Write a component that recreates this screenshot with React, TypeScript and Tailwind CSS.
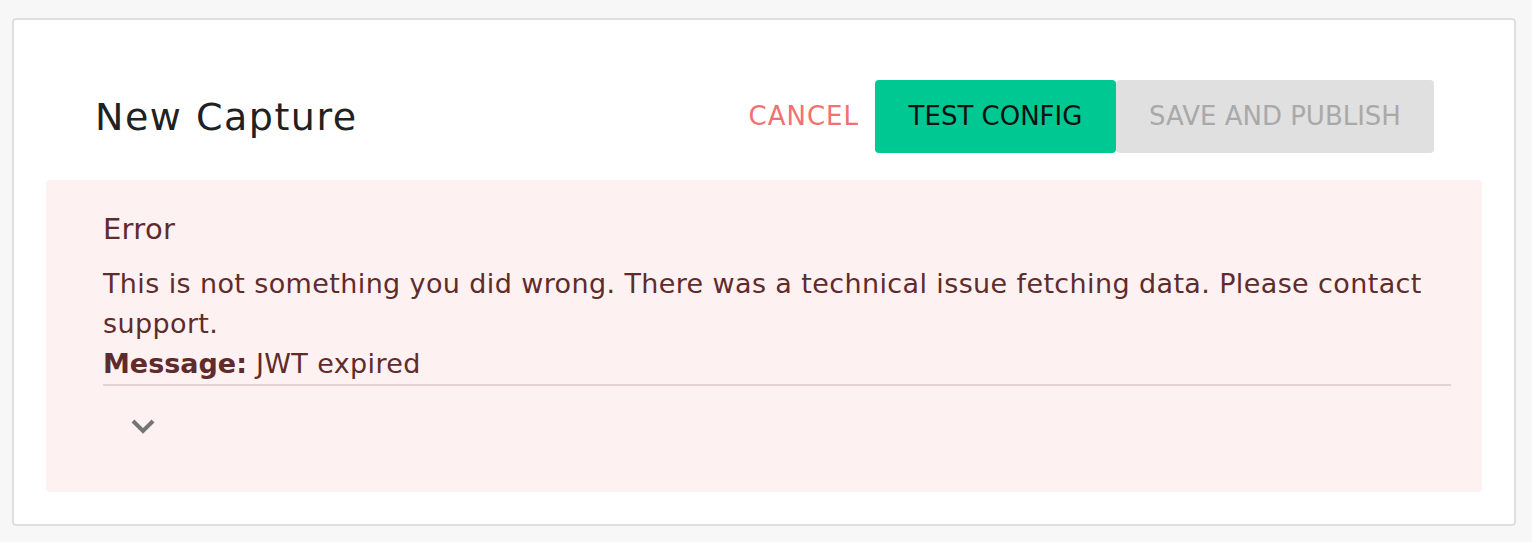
import React from "react";

export default function App() {
  const font = { fontFamily: '"DejaVu Sans", "Open Sans", sans-serif' };
  return (
    <div className="w-full h-[542px] bg-[#f7f7f7] pt-[18px] pl-[12px] pr-[16px] pb-[16px]" style={font}>
      <div className="h-full border-2 border-[#dfdfdf] rounded-[4px] bg-white px-[32px] pt-[60px] pb-[32px] flex flex-col">
        <div className="flex items-center justify-between pl-[49px] pr-[48px] h-[73px]">
          <h1 className="text-[38px] font-normal text-[#212121] tracking-[1.5px] leading-[48px]">New Capture</h1>
          <div className="flex items-center h-full">
            <button className="text-[26px] text-[#f17171] pl-[16px] pr-[16px] h-full uppercase tracking-[1px]">Cancel</button>
            <button className="text-[26px] text-[#111] bg-[#00c892] rounded-[4px] h-full w-[241px] uppercase">Test Config</button>
            <button className="text-[26px] text-[#a9a9a9] bg-[#e0e0e0] rounded-[4px] h-full w-[318px] uppercase">Save and Publish</button>
          </div>
        </div>
        <div className="mt-[27px] flex-1 bg-[#fef1f1] rounded-[4px] pl-[57px] pr-[31px] pt-[29px] text-[#5f2b2b]">
          <div className="text-[29px] font-normal leading-[40px] tracking-[0.3px]">Error</div>
          <div className="text-[27px] leading-[40px] mt-[15px] tracking-[0.38px]">
            This is not something you did wrong. There was a technical issue fetching data. Please contact support.
          </div>
          <div className="text-[27px] leading-[40px] border-b-2 border-[#e3d3d3] tracking-[0.38px]">
            <span className="font-bold tracking-[0px]">Message:</span> JWT expired
          </div>
          <div className="mt-[32px] pl-[27px]">
            <svg width="26" height="18" viewBox="0 0 26 18" className="block">
              <path d="M3 3 L13 13 L23 3" fill="none" stroke="#757575" strokeWidth="4" />
            </svg>
          </div>
        </div>
      </div>
    </div>
  );
}
